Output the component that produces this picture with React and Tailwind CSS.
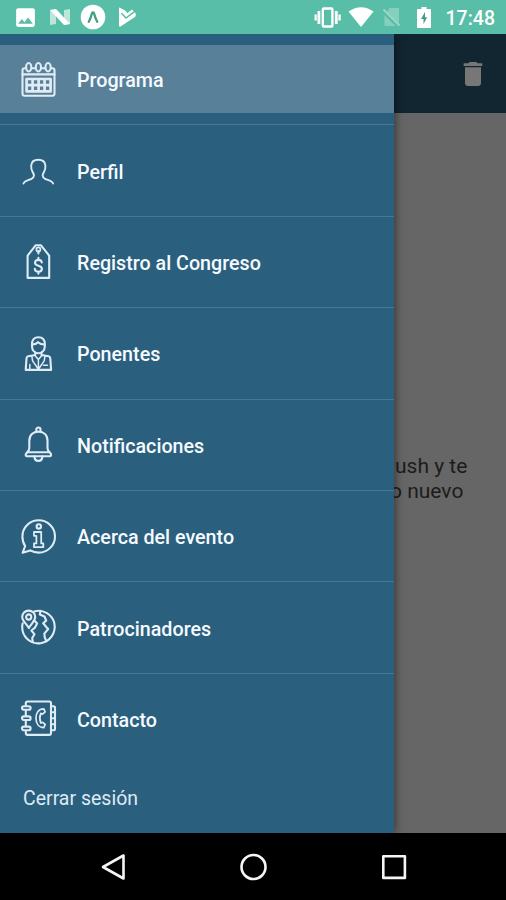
import { MdDelete, MdImage } from 'react-icons/md'

// ============================================
// MENU ICONS (36x36 line icons)
// ============================================

function LineIcon({ children }) {
  return (
    <svg
      viewBox="0 0 36 36"
      className="mt-px h-9 w-9 shrink-0 overflow-visible text-[#dfebf5]"
      fill="none"
      stroke="currentColor"
      strokeWidth="2.1"
      strokeLinecap="round"
      strokeLinejoin="round"
    >
      {children}
    </svg>
  )
}

function CalendarIcon() {
  return (
    <LineIcon>
      <path d="M5.5 6.3H4.5Q2.5 6.3 2.5 8.3V31.8Q2.5 33.8 4.5 33.8H32.5Q34.5 33.8 34.5 31.8V8.3Q34.5 6.3 32.5 6.3H31.5" />
      <path d="M12 6.3H15M22 6.3H25M2.5 12.4H34.5" />
      <ellipse cx="8.7" cy="5.2" rx="2.6" ry="4.2" />
      <ellipse cx="18.4" cy="5.2" rx="2.6" ry="4.2" />
      <ellipse cx="28.1" cy="5.2" rx="2.6" ry="4.2" />
      <path d="M6.6 17H30.6V29.4H6.6ZM6.6 23.2H30.6M12.6 17V29.4M18.6 17V29.4M24.6 17V29.4" strokeWidth="2.7" />
    </LineIcon>
  )
}

function ProfileIcon() {
  return (
    <LineIcon>
      <path
        strokeWidth="1.9"
        d="M3.5 30.6C4.2 28 8 27.4 11.5 25.8C14.8 24.3 14.2 21.4 12.8 19.4C11.3 17.2 11 14.6 11.2 12.4C11.6 8.8 14.5 6.8 18.3 6.8C22.1 6.8 25 8.8 25.4 12.4C25.6 14.6 25.3 17.2 23.8 19.4C22.4 21.4 21.8 24.3 25.1 25.8C28.6 27.4 32.4 28 33.1 30.6"
      />
    </LineIcon>
  )
}

function TagIcon() {
  return (
    <LineIcon>
      <path d="M15.8 1.2H20.8L29.2 11.6V33.9H7.6V11.6Z" />
      <circle cx="18.4" cy="5.4" r="2" strokeWidth="1.7" />
      <path d="M18.4 7.4V9.5" />
      <path d="M21.8 18.4C21.5 16.7 20.2 15.9 18.4 15.9C16.5 15.9 15 17 15 18.8C15 22.8 21.9 20.9 21.9 24.8C21.9 26.7 20.4 27.7 18.4 27.7C16.4 27.7 15 26.7 14.8 24.9M18.4 13.7V15.9M18.4 27.7V29.7" />
    </LineIcon>
  )
}

function SpeakerIcon() {
  return (
    <LineIcon>
      <path d="M12 8C12 3.6 14.5 1.2 18.4 1.2C22.3 1.2 24.8 3.6 24.8 8V10.5C24.8 14.4 21.8 17.3 18.4 17.3C15 17.3 12 14.4 12 10.5Z" />
      <path d="M12.3 8.5C15 8.3 17 7.6 18 6.2C19.8 7.9 22 8.5 24.5 8.5" />
      <path d="M15.3 16.6V19L8.2 20.3Q6.7 20.6 6.5 22.4L5.7 33.9H31.1L30.3 22.4Q30.1 20.6 28.6 20.3L21.5 19V16.6" />
      <path d="M14.5 19L18.4 23.4L22.3 19M18.4 23.4V33.9M11.8 19.8L12.6 24.8L18.2 33M25 19.8L24.2 24.8L18.6 33M9.8 28.5V33.5M23.5 29.3H27.5" strokeWidth="1.5" />
    </LineIcon>
  )
}

function BellIcon() {
  return (
    <LineIcon>
      <path d="M16.3 4.6V2.5C16.3 -.2 20.5 -.2 20.5 2.5V4.6" />
      <path d="M9.3 21V14C9.3 8 13.2 4.6 18.4 4.6C23.6 4.6 27.5 8 27.5 14V21C27.5 23 28.2 24 29.5 25.2L31 27.2Q31.4 29.2 29.8 29.2H7Q5.4 29.2 5.8 27.2L7.3 25.2C8.6 24 9.3 23 9.3 21" />
      <path d="M7.3 25.3H29.5M14.4 29.4C14.6 35.4 22.2 35.4 22.4 29.4" />
    </LineIcon>
  )
}

function InfoIcon() {
  return (
    <LineIcon>
      <path d="M5.2 27C3.2 24.3 2.4 21 2.4 17.4C2.4 8.4 9.7 1.2 18.7 1.2C27.7 1.2 35 8.4 35 17.4C35 26.4 27.7 33.6 18.7 33.6C15.6 33.6 12.6 32.8 10.2 31.4L2.6 33.8Z" />
      <circle cx="18.8" cy="7.4" r="2.2" />
      <path d="M14 13H21.2V24.4H23.3V28.2H14V24.4H16.4V16.8H14Z" strokeWidth="1.8" />
    </LineIcon>
  )
}

function GlobeIcon() {
  return (
    <LineIcon>
      <path d="M14.2 1.4C23 -1 32.5 4.5 34.4 13.5C36.2 23 29.8 31.8 20.8 33.2C11 34.7 2.3 27.3 2.2 17.3C2.2 15.8 2.3 14.5 2.7 13.3" />
      <path d="M8.7 .6C4.8 .6 2.2 3.5 2.2 7C2.2 11 6.2 13.2 8.9 18C11.4 13.2 15.2 11 15.2 7C15.2 3.5 12.6 .6 8.7 .6Z" />
      <circle cx="8.7" cy="7" r="2.6" />
      <path d="M14.8 11L17.1 13.5L15 17.6L11.4 20.5L14.5 24.3L12.2 28L12.8 32M20.4 .9L19.8 4.5L24.5 6.5L26.2 10.6L23.2 13.3L26.5 17.2L28.2 19L24.3 23.6L24.8 27.5L26.3 31.2" />
    </LineIcon>
  )
}

function PhonebookIcon() {
  return (
    <LineIcon>
      <path d="M5.8 4V2.3Q5.8 .5 7.6 .5H29.2Q31 .5 31 2.3V32.1Q31 33.9 29.2 33.9H7.6Q5.8 33.9 5.8 32.1V30.4M5.8 10V14.2M5.8 20.2V24.4" />
      <path d="M31 5.2H33.5Q35 5.2 35 6.7V27.7Q35 29.2 33.5 29.2H31M31 11.2H35M31 17.2H35M31 23.2H35" />
      <rect x="2" y="5.2" width="8.6" height="3.6" rx="1.8" />
      <rect x="2" y="15.4" width="8.6" height="3.6" rx="1.8" />
      <rect x="2" y="25.6" width="8.6" height="3.6" rx="1.8" />
      <path d="M23.8 7.8C18.6 7.8 16 12 16 17.2C16 22.4 18.6 26.6 23.8 26.6L25.2 23.5L22.6 21.3L20.8 22C19.6 19 19.6 15.4 20.8 12.4L22.6 13.1L25.2 10.9Z" strokeWidth="1.7" />
    </LineIcon>
  )
}

const items = [
  { label: 'Programa', icon: CalendarIcon, active: true },
  { label: 'Perfil', icon: ProfileIcon },
  { label: 'Registro al Congreso', icon: TagIcon },
  { label: 'Ponentes', icon: SpeakerIcon },
  { label: 'Notificaciones', icon: BellIcon },
  { label: 'Acerca del evento', icon: InfoIcon },
  { label: 'Patrocinadores', icon: GlobeIcon },
  { label: 'Contacto', icon: PhonebookIcon },
]

// ============================================
// ANDROID STATUS BAR
// ============================================

function StatusBar() {
  return (
    <div className="flex h-[34px] shrink-0 items-center justify-between bg-[#58bea8] pl-[13px] pr-[11px] text-white">
      <div className="flex items-center">
        <MdImage className="h-[25px] w-[25px]" />
        <svg viewBox="0 0 22 18" className="ml-[11px] h-[18px] w-[22px]" fill="currentColor">
          <path d="M1 2L7 1V16L1 17ZM15 2L21 1V16L15 17Z" opacity=".6" />
          <path d="M1 2L7 1L21 16L15 17Z" />
        </svg>
        <svg viewBox="0 0 26 26" className="ml-[9px] h-[26px] w-[26px]">
          <circle cx="13" cy="13" r="12.3" fill="currentColor" />
          <path d="M8.8 17.8Q11 13.5 12 9.3Q13 7.5 14 9.3Q15 13.5 17.2 17.8" fill="none" stroke="#459e84" strokeWidth="2.3" strokeLinecap="round" />
        </svg>
        <svg viewBox="0 0 20 22" className="ml-[11px] h-[22px] w-5">
          <path d="M2 2.5Q2 1.200 3 1.800L8 4.500L10 6.500L14 2.500L18.500 7Q19.500 9 18 11L3.500 20.500Q2 21 2 19.500Z" fill="currentColor" />
          <path d="M4.500 7.200L9 12L18.500 4.800" fill="none" stroke="#58bea8" strokeWidth="1.500" />
          <path d="M9.500 4.500L12.500 1.500L15.500 3L10.200 7.300Z" fill="#58bea8" />
        </svg>
      </div>
      <div className="flex items-center">
        <svg viewBox="0 0 27 21" className="h-[21px] w-[27px]" fill="currentColor">
          <rect x="8.800" y="1.500" width="9.600" height="18" rx="1" fill="none" stroke="currentColor" strokeWidth="2.400" />
          <path d="M3.500 4H6.300V17H3.500ZM.5 7.500H2.800V13.500H.5ZM20.900 4H23.700V17H20.900ZM24.400 7.500H26.700V13.500H24.400Z" />
        </svg>
        <svg viewBox="0 0 26 20" className="ml-[7px] h-5 w-[26px]" fill="currentColor">
          <path d="M.5 4.500Q13 -4 25.500 4.500L13 20Z" />
        </svg>
        <svg viewBox="0 0 20 20" className="ml-[8px] h-5 w-5" fill="#85cfbd">
          <path d="M7.500 1H17V17L5.200 5.200ZM2.500 8L13.500 19H2.500Z" />
          <path d="M1.500 2.500L17.500 18.500" stroke="#9cd9ca" strokeWidth="1.800" />
        </svg>
        <svg viewBox="0 0 14 21" className="ml-[15px] h-[21px] w-[14px]">
          <path d="M4.500 0H9.500V2H13Q14 2 14 3V20Q14 21 13 21H1Q0 21 0 20V3Q0 2 1 2H4.500Z" fill="currentColor" />
          <path d="M8 5L4 12H6.500V17L10.200 10.300H8Z" fill="#459e84" />
        </svg>
        <span className="ml-[15px] pt-[4px] text-[19.5px] leading-none font-medium">17:48</span>
      </div>
    </div>
  )
}

function MenuItem({ label, icon: Icon, active }) {
  return (
    <div className={`flex h-[68.4px] items-center pl-5 ${active ? 'bg-[#588098]' : ''}`}>
      <Icon />
      <span className="ml-[21px] pt-[4px] text-[19.7px] leading-6 font-medium text-[#f5faff]">{label}</span>
    </div>
  )
}

function Drawer() {
  return (
    <nav className="absolute inset-y-0 left-0 w-[394px] bg-[#2b5f7e] pt-[11px] shadow-[1px_0_9px_rgba(0,0,0,0.5)]">
      {items.map((item, index) => (
        <div key={item.label}>
          {index > 0 && <div className="my-[11px] h-px bg-[#477891]" />}
          <MenuItem {...item} />
        </div>
      ))}
      <div className="pt-[34px] pl-[23px] text-[19.5px] leading-6 text-[#dcebf5]">Cerrar sesión</div>
    </nav>
  )
}

export default function App() {
  return (
    <div className="flex h-[900px] w-[506px] flex-col overflow-hidden bg-black font-[Roboto,sans-serif]">
      <StatusBar />

      {/* Dimmed screen with the drawer over it */}
      <div className="relative flex h-[799px] shrink-0 flex-col overflow-hidden bg-[#666666]">
        <header className="flex h-[79px] items-center justify-end bg-[#112631] pr-[17px]">
          <MdDelete className="h-8 w-8 text-[#777777]" />
        </header>
        <div className="pt-[341px] pl-[390px] text-[21px] leading-[25px] whitespace-nowrap text-[#1c1c1c]">
          <p className="pl-[5px]">ush y te</p>
          <p>o nuevo</p>
        </div>
        <Drawer />
      </div>

      {/* Android navigation buttons */}
      <div className="flex flex-1 items-center justify-between px-[99px]">
        <svg viewBox="0 0 28 28" className="h-7 w-7" fill="none" stroke="#f5f5f5" strokeWidth="2.6" strokeLinejoin="round">
          <path d="M24.500 2.500V25.500L4 14Z" />
        </svg>
        <svg viewBox="0 0 28 28" className="h-7 w-7" fill="none" stroke="#f5f5f5" strokeWidth="2.6">
          <circle cx="14.500" cy="14" r="12" />
        </svg>
        <svg viewBox="0 0 28 28" className="h-7 w-7" fill="none" stroke="#f5f5f5" strokeWidth="2.6" strokeLinejoin="round">
          <rect x="4.300" y="3.300" width="21.600" height="21.600" />
        </svg>
      </div>
    </div>
  )
}
